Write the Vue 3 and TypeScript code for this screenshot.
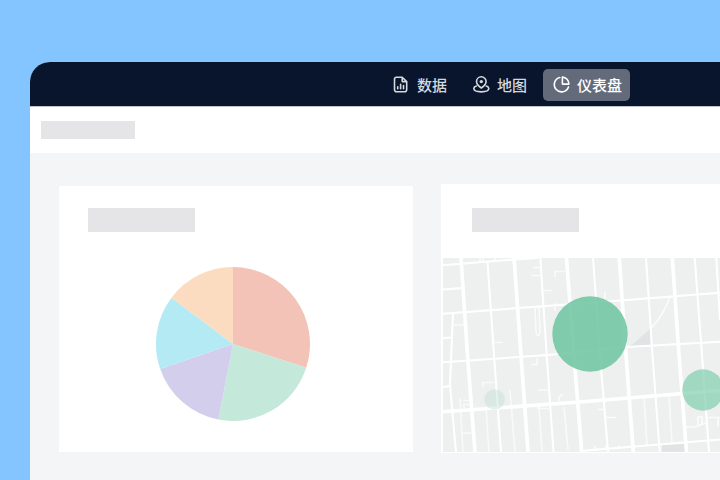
<script setup lang="ts">
interface Slice {
  from: number
  to: number
  color: string
}

interface Road {
  d: string
  w: number
  opacity?: number
}

const slices: Slice[] = [
  { from: 0, to: 108, color: '#f4c3b7' },
  { from: 108, to: 191, color: '#c4e8d9' },
  { from: 191, to: 251, color: '#d2ceec' },
  { from: 251, to: 307, color: '#b4eaf4' },
  { from: 307, to: 360, color: '#fbdcc0' },
]

const point = (deg: number): string => {
  const a = (deg * Math.PI) / 180
  return `${(77 + 77 * Math.sin(a)).toFixed(2)} ${(77 - 77 * Math.cos(a)).toFixed(2)}`
}

const slicePath = (s: Slice): string => `M77 77 L${point(s.from)} A77 77 0 0 1 ${point(s.to)} Z`

const roads: Road[] = [
  { w: 3.6, d: 'M18 0 L24.5 97 L32 194 M71 0 L78 97 L85 194 M123.5 0 L131.5 104 L138.7 194 M176.3 0 L183 97 L190.3 194 M229.3 0 L236 97 L243.5 194' },
  { w: 2, d: 'M44.5 4 L51 97 L58 194 M97.3 0 L103.7 97 L110.5 194 M150 0 L157 97 L165 194 M203 0 L209.5 97 L216.7 194 M251.7 0 L259 97 L266 194 M273.3 0 L277 62' },
  { w: 2, d: 'M0 7.3 L71 1.5 L95 0 M0 55.7 L130 46 L184 42 L277 34.7 M0 104.3 L105 97 L184 89 L277 83.7 M137 193 L277 181.5' },
  { w: 3.6, d: 'M0 153.7 L137 144 L277 132.5' },
  { w: 2, d: 'M0 31.5 L20 30 M0 80 L9 79.5 M10 55 L7 127 L13 194 M0 129 L8 128' },
  { w: 1.6, opacity: 0.6, d: 'M11 67 H22 M17 140 L20 194 M20 175 H30 M43 150 L46 194 M67 132 L72 194 M96 149 L99 194 M121 149 L125 192 M201 140 L204 188 M226 138 L229 186' },
  { w: 1.6, opacity: 0.65, d: 'M40 0 V4 M37 0 V5 M52 0 V2 M90 9.5 H98 M88 17.5 H97 M112 19 V13.5 H122 M100 32.5 H109 M51 84.5 H60 M112 45 V53 M92 50 L93 75 Q95 80 97 75 L96 49 M40 129 V124.5 H51 M20 142.5 H27 M21 150 V146.5 H28 M88 106.5 H94 V100 M95 132 H105 M95 146 V150.5 H106 M116 143 V139 L120 136' },
  { w: 1.6, opacity: 0.75, d: 'M162 34 V41 M155 151.5 H160 M162 159.5 H173 M152 188 V192 M163 187 V191 M176 187 V191 M227 39 Q219 60 208 70 M243 169 L252 169 L263 165 M255 168 V159 H259 V166 M265 159.5 H277 M275 160 V168' },
]
</script>

<template>
  <main class="page">
    <div class="window">
      <header class="topbar">
        <nav class="nav">
          <a class="item" href="#data">
            <svg class="icon" viewBox="0 0 17 17">
              <path d="M1.5 3.3 Q1.5 1.2 3.5 1.2 H9.2 L13.7 5.6 V13.5 Q13.7 15.8 11.5 15.8 H3.7 Q1.5 15.8 1.5 13.5 Z M9.2 1.4 V5.6 H13.5" />
              <path d="M4.7 10.9 V12.7 M7.6 8.4 V12.7 M10.5 9.6 V12.7" />
            </svg>
            <span>数据</span>
          </a>
          <a class="item" href="#map">
            <svg class="icon" viewBox="0 0 17 17">
              <path d="M8.3 12 Q3.5 8.9 3.5 5.6 A4.8 4.8 0 0 1 13.1 5.6 Q13.1 8.9 8.3 12 Z" />
              <circle class="dot" cx="8.3" cy="5.6" r="1.7" />
              <path d="M3.3 10.1 Q0.8 11 0.8 12.6 C0.8 14.8 4.3 15.9 8.3 15.9 S15.8 14.8 15.8 12.6 Q15.8 11 13.3 10.1" />
            </svg>
            <span>地图</span>
          </a>
          <a class="item active" href="#dashboard" aria-current="page">
            <svg class="icon" viewBox="0 0 17 17">
              <path d="M6.8 1.5 A7.3 7.3 0 1 0 15.5 11" />
              <path d="M9.4 1.1 V8.1 H15.9 A7 7 0 0 0 9.4 1.1 Z" />
            </svg>
            <span>仪表盘</span>
          </a>
        </nav>
      </header>
      <div class="toolbar"><div class="placeholder small"></div></div>
      <div class="board">
        <section class="card chart-card">
          <div class="placeholder"></div>
          <svg class="pie" viewBox="0 0 154 154">
            <path v-for="s in slices" :key="s.from" :d="slicePath(s)" :fill="s.color" />
          </svg>
        </section>
        <section class="card map-card">
          <div class="placeholder"></div>
          <svg class="map">
            <rect width="100%" height="194" fill="#eef0f0" />
            <path d="M185 90 L207 71 V88 Z M219 187 L243 186 V194 H219 Z" fill="#e1e4e5" />
            <path
              v-for="(r, i) in roads"
              :key="i"
              :d="r.d"
              :stroke-width="r.w"
              :stroke-opacity="r.opacity ?? 1"
              fill="none"
              stroke="#fff"
            />
            <circle cx="147" cy="76" r="37.7" fill="#6ac49e" fill-opacity=".84" />
            <circle cx="260" cy="132" r="20.7" fill="#77cba8" fill-opacity=".65" />
            <circle cx="51.7" cy="141.5" r="10.3" fill="#b9dfce" fill-opacity=".4" />
          </svg>
        </section>
      </div>
    </div>
  </main>
</template>

<style>
body {
  margin: 0;
}
</style>

<style scoped>
.page {
  box-sizing: border-box;
  display: flex;
  min-height: 100vh;
  padding: 62px 0 0 30px;
  overflow: hidden;
  background: #85c5ff;
  font-family: "Noto Sans CJK SC", sans-serif;
}

/* The window runs past the right edge of the page. */
.window {
  display: flex;
  flex: 1;
  flex-direction: column;
  margin-right: -263px;
  overflow: hidden;
  border-radius: 20px 0 0 0;
  background: #f3f5f7;
}

.topbar {
  display: flex;
  align-items: center;
  justify-content: center;
  height: 44px;
  padding-top: 1px;
  box-sizing: border-box;
  background: #08152d;
}

.nav {
  display: flex;
  gap: 8px;
}

.item {
  display: flex;
  align-items: center;
  gap: 7px;
  height: 32px;
  padding: 0 8px 0 10px;
  border-radius: 5px;
  color: #d5d8dd;
  font-size: 15px;
  font-weight: 500;
  line-height: 20px;
  text-decoration: none;
}

.active {
  background: #636b7b;
  color: #fff;
}

.icon {
  width: 17px;
  height: 17px;
  fill: none;
  stroke: currentColor;
  stroke-width: 1.6;
  stroke-linecap: round;
  stroke-linejoin: round;
}

.dot {
  fill: currentColor;
  stroke: none;
}

.toolbar {
  display: flex;
  align-items: center;
  height: 46px;
  padding-left: 11px;
  border-top: 1px solid #bfc3ca;
  background: #fff;
}

.placeholder {
  width: 107px;
  height: 24px;
  background: #e5e5e7;
}

.placeholder.small {
  width: 94px;
  height: 18px;
}

.board {
  display: grid;
  grid-template-columns: 354fr 512fr;
  gap: 28px;
  align-items: center;
  padding: 31px 29px 27px;
}

.card {
  background: #fff;
}

.chart-card {
  display: flex;
  flex-direction: column;
  gap: 35px;
  padding: 22px 35px 31px 29px;
}

.pie {
  align-self: center;
  width: 154px;
  height: 154px;
}

.map-card {
  padding: 24px 0 1px 2px;
}

.map-card .placeholder {
  margin: 0 0 26px 29px;
}

.map {
  display: block;
  width: 100%;
  height: 194px;
}
</style>
